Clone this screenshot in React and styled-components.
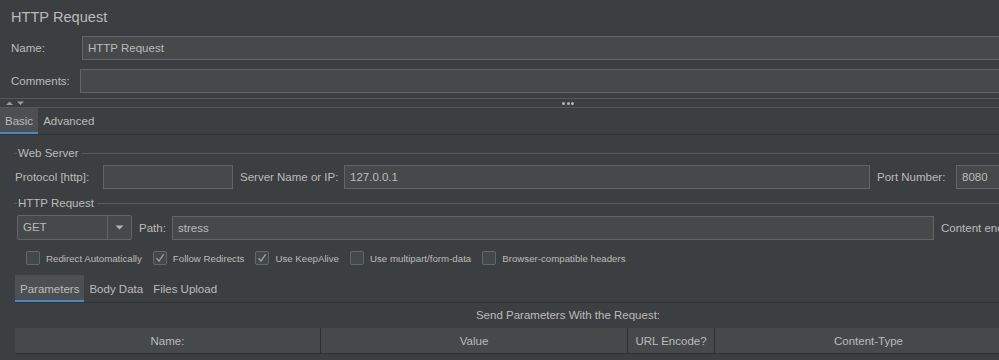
import React from "react";
import styled, { createGlobalStyle } from "styled-components";

const GlobalStyle = createGlobalStyle`
  body {
    margin: 0;
    background: #3c3f41;
    overflow: hidden;
  }
`;

const Root = styled.div`
  width: 1136px;
  height: 360px;
  overflow: hidden;
  background: #3c3f41;
  color: #bbbbbb;
  font-family: "Liberation Sans", Arial, sans-serif;
  font-size: 11.5px;
`;

const Header = styled.div`
  padding-left: 11px;
`;

const Title = styled.div`
  height: 34px;
  line-height: 34px;
  font-size: 14.6px;
  margin-bottom: 2px;
`;

const Row = styled.div`
  display: flex;
  align-items: center;
  height: ${(p) => p.$h || 24}px;
  margin-top: ${(p) => p.$mt || 0}px;
  padding-left: ${(p) => p.$pl || 0}px;
`;

const Label = styled.div`
  flex: none;
  width: ${(p) => (p.$w ? `${p.$w}px` : "auto")};
  margin-left: ${(p) => p.$ml || 0}px;
  white-space: nowrap;
`;

const Field = styled.div`
  box-sizing: border-box;
  flex: ${(p) => (p.$w ? "none" : 1)};
  width: ${(p) => (p.$w ? `${p.$w}px` : "auto")};
  height: 24px;
  line-height: 22px;
  padding: 0 5px;
  background: #45494a;
  border: 1px solid #646464;
  white-space: nowrap;
  overflow: hidden;
`;

const Splitter = styled.div`
  box-sizing: border-box;
  margin-top: 5px;
  height: 10px;
  border-top: 1px solid #55585a;
  border-bottom: 1px solid #55585a;
  display: grid;
  grid-template-columns: 1fr auto 1fr;
  align-items: center;
`;

const Arrows = styled.svg`
  margin-left: 5px;
  display: block;
`;

const Dots = styled.div`
  display: flex;
  gap: 1.5px;
`;

const Dot = styled.span`
  width: 3px;
  height: 3px;
  border-radius: 50%;
  background: #b4b4b4;
`;

const TabBar = styled.div`
  box-sizing: border-box;
  display: flex;
  height: ${(p) => p.$h}px;
  border-bottom: 1px solid #303234;
  margin-left: ${(p) => p.$ml || 0}px;
  margin-top: ${(p) => p.$mt || 0}px;
`;

const Tab = styled.div`
  box-sizing: border-box;
  display: flex;
  align-items: center;
  height: 100%;
  padding: 2px 5px 0 5px;
  background: ${(p) => (p.$active ? "#4c5052" : "transparent")};
  border-bottom: 2px solid ${(p) => (p.$active ? "#4a88c7" : "transparent")};
`;

const Body = styled.div`
  padding: 0 15px 0 14px;
`;

const GroupTitle = styled.div`
  display: flex;
  align-items: center;
  height: 14px;
  margin-top: ${(p) => p.$mt}px;
  &::before {
    content: "";
    width: 3px;
    height: 1px;
    background: #595c5e;
    margin-right: 1px;
  }
  &::after {
    content: "";
    flex: 1;
    height: 1px;
    background: #595c5e;
    margin-left: 3px;
  }
`;

const Combo = styled.div`
  box-sizing: border-box;
  display: flex;
  width: 115px;
  height: 25px;
  border: 1px solid #646464;
  border-radius: 2px;
  background: #45494a;
`;

const ComboText = styled.div`
  flex: 1;
  line-height: 23px;
  padding-left: 5px;
`;

const ComboButton = styled.div`
  width: 23px;
  border-left: 1px solid #646464;
  display: flex;
  align-items: center;
  justify-content: center;
`;

const Checks = styled.div`
  display: flex;
  align-items: center;
  gap: 11px;
  height: 14px;
  margin-top: 11px;
  padding-left: 12px;
  font-size: 9.7px;
`;

const CheckItem = styled.div`
  display: flex;
  align-items: center;
  gap: 6px;
  white-space: nowrap;
`;

const Box = styled.div`
  box-sizing: border-box;
  width: 14px;
  height: 14px;
  border: 1px solid #666868;
  border-radius: 2px;
  background: #43494a;
  display: flex;
  align-items: center;
  justify-content: center;
`;

const Caption = styled.div`
  height: 25px;
  line-height: 25px;
  text-align: center;
  margin-left: 1px;
`;

const Table = styled.div`
  margin-left: 1px;
`;

const HeadRow = styled.div`
  display: grid;
  grid-template-columns: 306px 307px 87px 308px 1fr;
  height: 26px;
  box-sizing: border-box;
  background: #45494a;
  border-bottom: 1px solid #2e3031;
`;

const HeadCell = styled.div`
  box-sizing: border-box;
  border-right: 1px solid #2e3031;
  display: flex;
  align-items: center;
  justify-content: center;
  white-space: nowrap;
`;

const Check = ({ on, label }) => (
  <CheckItem>
    <Box>
      {on && (
        <svg width="10" height="10" viewBox="0 0 10 10">
          <path d="M1.5 5.2 L4 8 L8.6 1.4" fill="none" stroke="#a8a8a8" strokeWidth="1.2" />
        </svg>
      )}
    </Box>
    {label}
  </CheckItem>
);

export default function App() {
  return (
    <Root>
      <GlobalStyle />
      <Header>
        <Title>HTTP Request</Title>
        <Row>
          <Label $w={71}>Name:</Label>
          <Field>HTTP Request</Field>
        </Row>
        <Row $mt={9}>
          <Label $w={69}>Comments:</Label>
          <Field />
        </Row>
      </Header>
      <Splitter>
        <Arrows width="26" height="8" viewBox="0 0 26 8">
          <path d="M1 6 L4.5 2.5 L8 6 Z" fill="#9c9c9c" />
          <path d="M12 2.5 L19 2.5 L15.5 6 Z" fill="#9c9c9c" />
        </Arrows>
        <Dots>
          <Dot />
          <Dot />
          <Dot />
        </Dots>
        <span />
      </Splitter>
      <TabBar $h={27}>
        <Tab $active>Basic</Tab>
        <Tab>Advanced</Tab>
      </TabBar>
      <Body>
        <GroupTitle $mt={11}>Web Server</GroupTitle>
        <Row $mt={5} $pl={1}>
          <Label $w={88}>Protocol [http]:</Label>
          <Field $w={130} />
          <Label $w={104} $ml={7}>Server Name or IP:</Label>
          <Field $w={526}>127.0.0.1</Field>
          <Label $w={79} $ml={7}>Port Number:</Label>
          <Field $w={160}>8080</Field>
        </Row>
        <GroupTitle $mt={7}>HTTP Request</GroupTitle>
        <Row $mt={5} $h={25} $pl={3}>
          <Combo>
            <ComboText>GET</ComboText>
            <ComboButton>
              <svg width="9" height="5" viewBox="0 0 9 5">
                <path d="M0.5 0.5 L8.5 0.5 L4.5 4.5 Z" fill="#b4b4b4" />
              </svg>
            </ComboButton>
          </Combo>
          <Label $w={33} $ml={7}>Path:</Label>
          <Field $w={762}>stress</Field>
          <Label $ml={7}>Content encoding:</Label>
        </Row>
        <Checks>
          <Check label="Redirect Automatically" />
          <Check on label="Follow Redirects" />
          <Check on label="Use KeepAlive" />
          <Check label="Use multipart/form-data" />
          <Check label="Browser-compatible headers" />
        </Checks>
        <TabBar $h={28} $ml={1} $mt={10}>
          <Tab $active>Parameters</Tab>
          <Tab>Body Data</Tab>
          <Tab>Files Upload</Tab>
        </TabBar>
        <Caption>Send Parameters With the Request:</Caption>
        <Table>
          <HeadRow>
            <HeadCell>Name:</HeadCell>
            <HeadCell>Value</HeadCell>
            <HeadCell>URL Encode?</HeadCell>
            <HeadCell>Content-Type</HeadCell>
            <HeadCell />
          </HeadRow>
        </Table>
      </Body>
    </Root>
  );
}
